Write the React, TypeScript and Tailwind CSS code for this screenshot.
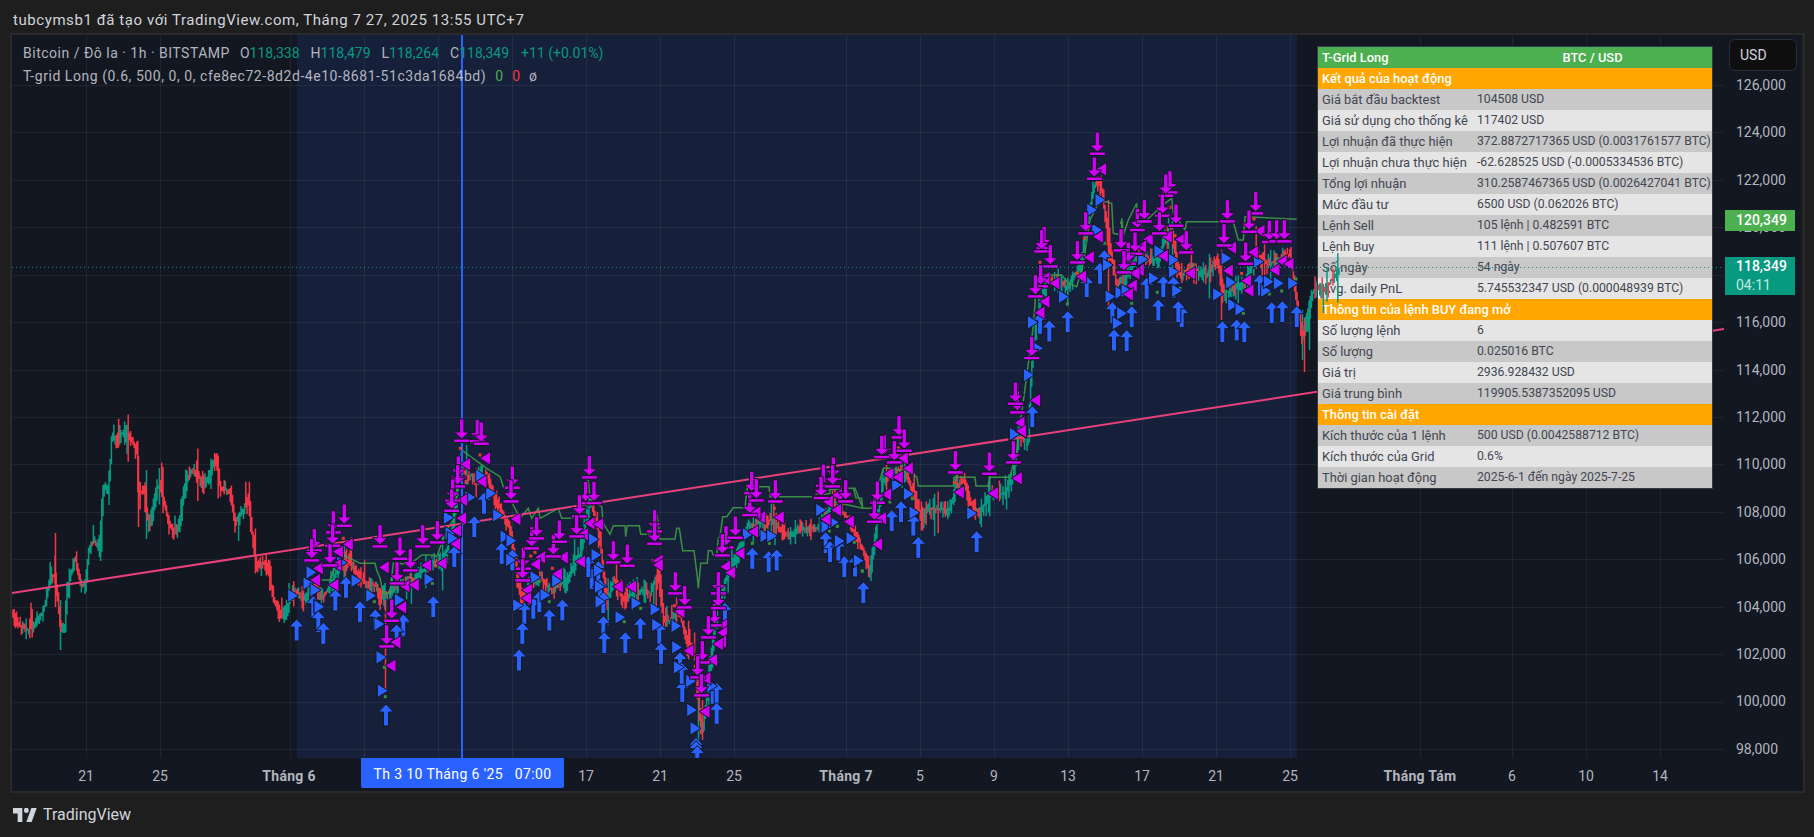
import React from "react";

type Pt = [number, number];

// toạ độ đọc từ ảnh phóng to 3x, đổi về toạ độ trang
const z = (ox: number, oy: number, pts: number[][]): Pt[] =>
  pts.map(([x, y]) => [ox + x / 3, oy + y / 3]);

const priceLabels = ["126,000", "124,000", "122,000", "120,000", "118,000", "116,000", "114,000", "112,000", "110,000", "108,000", "106,000", "104,000", "102,000", "100,000", "98,000"];
const gridY = priceLabels.map((_, i) => 85 + i * 47.43);
const gridX = [86, 160, 290, 364, 438, 512, 586, 660, 734, 846, 920, 994, 1068, 1142, 1216, 1290, 1420, 1512, 1586, 1660];

const ticks: { x: number; label: string; bold?: boolean }[] = [
  { x: 86, label: "21" },
  { x: 160, label: "25" },
  { x: 289, label: "Tháng 6", bold: true },
  { x: 586, label: "17" },
  { x: 660, label: "21" },
  { x: 734, label: "25" },
  { x: 846, label: "Tháng 7", bold: true },
  { x: 920, label: "5" },
  { x: 994, label: "9" },
  { x: 1068, label: "13" },
  { x: 1142, label: "17" },
  { x: 1216, label: "21" },
  { x: 1290, label: "25" },
  { x: 1420, label: "Tháng Tám", bold: true },
  { x: 1512, label: "6" },
  { x: 1586, label: "10" },
  { x: 1660, label: "14" },
];

const path: Pt[] = [
  ...z(0, 400, [[40, 650], [60, 680], [85, 690], [110, 670], [130, 630], [150, 540], [165, 520], [180, 680], [192, 700], [200, 580], [215, 510], [225, 470], [240, 550], [255, 560], [265, 450], [280, 420], [300, 450], [310, 250], [325, 280], [335, 100], [350, 130], [370, 90], [385, 100], [400, 130], [410, 150], [415, 290], [430, 260], [445, 370], [460, 320], [470, 260], [485, 270], [500, 350], [520, 400], [535, 390], [550, 280], [570, 210], [590, 220], [610, 250], [630, 225], [645, 170], [660, 260], [690, 280], [705, 370], [725, 340], [745, 290], [755, 400], [770, 500], [790, 490], [805, 510], [820, 600], [840, 650], [860, 630]]),
  ...z(280, 420, [[40, 510], [75, 540], [100, 490], [130, 530], [180, 440], [210, 420], [250, 490], [290, 500], [300, 540], [350, 490], [400, 480], [450, 430], [490, 420], [520, 310], [540, 130], [560, 170], [590, 160], [620, 170], [650, 250], [690, 330], [720, 530], [780, 470], [810, 510], [860, 480], [900, 400]]),
  ...z(570, 440, [[60, 180], [90, 300], [110, 500], [130, 410], [160, 480], [200, 450], [240, 460], [265, 400], [280, 540], [300, 540], [325, 510], [350, 600], [370, 620], [385, 780], [395, 880], [420, 690], [440, 500], [470, 410], [500, 350], [530, 260], [570, 250], [600, 240], [650, 290], [690, 265], [740, 265], [790, 190], [830, 230], [870, 310], [895, 380]]),
  ...z(790, 400, [[50, 380], [90, 320], [130, 300], [170, 350], [210, 430], [240, 520], [255, 400], [280, 240], [320, 210], [345, 220], [375, 290], [395, 360], [410, 325], [480, 330], [495, 260], [520, 240], [540, 310], [570, 340], [600, 280], [640, 280], [670, 230], [685, 100], [715, 120]]),
  ...z(1000, 230, [[85, 620], [90, 480], [100, 350], [115, 230]]),
  ...z(1000, 120, [[140, 480], [200, 500], [240, 440], [280, 200], [300, 180], [320, 330], [350, 500], [370, 480], [410, 410], [470, 420], [510, 330], [540, 470], [570, 440], [620, 465], [650, 420], [670, 520], [700, 510], [730, 490], [770, 400], [800, 430], [840, 420], [870, 400], [890, 540], [905, 650], [920, 620], [935, 520], [950, 495]]),
  [1325, 290], [1332, 278], [1340, 270],
];

const wicks: number[][] = [[55, 533, 607], [60, 600, 650], [138, 456, 527], [146, 470, 539], [385, 600, 690], [698, 680, 745], [702, 700, 740], [1302, 310, 360], [1304, 318, 372], [1309, 300, 350], [1108, 200, 310], [1172, 220, 290], [1221, 250, 320]];

const greenLine: Pt[] = [
  ...z(280, 420, [[125, 480], [150, 480], [165, 440], [190, 405], [240, 430], [285, 430], [290, 450], [300, 475], [310, 520], [330, 520], [340, 430], [390, 432], [425, 405], [460, 405], [470, 410], [500, 330], [520, 300], [545, 90], [620, 145], [660, 170], [670, 200], [690, 200], [700, 255], [720, 295], [745, 265], [755, 295], [775, 265], [780, 295], [835, 265], [845, 295], [890, 295], [900, 285]]),
  ...z(570, 440, [[30, 190], [55, 120], [60, 180], [95, 200], [100, 250], [120, 283], [130, 257], [165, 257], [167, 290], [172, 257], [208, 257], [212, 283], [240, 283], [262, 230], [270, 297], [315, 297], [320, 265], [328, 265], [338, 332], [372, 332], [382, 410], [385, 445], [392, 370], [412, 370], [415, 332], [425, 332], [430, 345], [440, 345], [445, 295], [450, 290], [458, 230], [470, 230], [490, 203], [525, 203], [532, 140], [597, 140], [600, 170], [730, 170], [760, 150], [845, 145], [855, 145], [878, 205]]),
  ...z(790, 400, [[70, 292], [120, 280], [120, 265], [190, 265], [198, 293], [215, 295], [218, 325], [245, 325], [280, 205], [300, 205], [350, 215], [380, 230], [385, 258], [490, 258], [492, 232], [555, 232], [558, 258], [595, 258], [598, 232], [660, 232], [680, 150]]),
  ...z(1000, 120, [[100, 620], [110, 480], [130, 465], [185, 465], [205, 490], [230, 500], [250, 430], [270, 300], [300, 240], [335, 250], [340, 340], [365, 345], [365, 295], [370, 345], [385, 300], [410, 250], [412, 300], [440, 300], [495, 250], [515, 235], [520, 280], [555, 330], [560, 305], [700, 305], [715, 360], [730, 360], [735, 290], [890, 298]]),
];

const sell: Pt[] = [
  ...z(280, 420, [[103, 392], [95, 422], [160, 338], [158, 378], [193, 318], [150, 437], [300, 380], [360, 417], [351, 491], [391, 452], [428, 380], [472, 368], [545, 63], [592, 65], [604, 72], [535, 174], [533, 200], [518, 243], [515, 273], [697, 204], [693, 245], [730, 447], [728, 482], [755, 386], [770, 356], [820, 410], [838, 366], [887, 350]]),
  ...z(280, 600, [[335, 63], [320, 140]]),
  ...z(570, 440, [[58, 113], [47, 190], [72, 190], [28, 230], [20, 290], [130, 368], [172, 378], [254, 275], [254, 312], [316, 461], [344, 503], [433, 557], [415, 593], [397, 668], [383, 713], [394, 767], [445, 461], [445, 505], [468, 323], [457, 347], [496, 294], [539, 226], [545, 160], [559, 182], [616, 185], [760, 137], [790, 117], [787, 140], [752, 172], [826, 184]]),
  ...z(790, 400, [[100, 258], [130, 237], [128, 260], [93, 295], [167, 305], [283, 170], [275, 172], [313, 188], [327, 113], [343, 153], [262, 309], [253, 366], [496, 218], [598, 222], [670, 188], [682, 38], [680, 12]]),
  ...z(1000, 120, [[292, 102], [283, 177], [132, 385], [125, 395], [151, 440], [232, 428], [257, 341], [122, 500], [106, 530], [95, 715], [412, 331], [433, 305], [405, 402], [385, 432], [363, 392], [372, 458], [510, 218], [497, 228], [487, 288], [478, 341], [528, 318], [559, 398], [682, 305], [672, 377], [767, 281], [747, 336], [737, 432], [808, 367], [830, 365], [853, 365]]),
  ...z(1000, 230, [[40, 698], [52, 548], [46, 522]]),
];

const sellTri: Pt[] = [
  ...z(280, 420, [[205, 373], [175, 395], [170, 435], [115, 445], [107, 480], [162, 495], [313, 442], [375, 498], [403, 495], [440, 436], [486, 430], [557, 133], [617, 115], [606, 185], [548, 240], [545, 295], [530, 332], [527, 372], [708, 297], [782, 412], [767, 433], [850, 412], [833, 462], [742, 510], [740, 535], [365, 562]]),
  ...z(280, 600, [[365, 22], [348, 127], [333, 197]]),
  ...z(570, 440, [[32, 365], [40, 283], [60, 250], [86, 253], [145, 440], [185, 440], [265, 362], [265, 375], [330, 515], [357, 632], [428, 660], [458, 556], [458, 578], [455, 605], [445, 612], [408, 715], [405, 815], [510, 340], [467, 380], [482, 398], [551, 275], [572, 232], [558, 218], [628, 232], [773, 184], [800, 210], [767, 238], [838, 243]]),
  ...z(790, 400, [[115, 305], [140, 330], [108, 358], [178, 365], [143, 285], [263, 433], [290, 283], [275, 355], [297, 222], [325, 232], [355, 205], [340, 175], [508, 277], [610, 280], [682, 235], [695, 95], [690, 68]]),
  ...z(1000, 120, [[305, 148], [295, 350], [268, 412], [245, 470], [135, 545], [165, 490], [135, 475], [120, 578], [445, 358], [425, 380], [418, 450], [405, 460], [397, 497], [385, 523], [490, 408], [502, 350], [542, 358], [572, 460], [695, 383], [685, 452], [740, 482], [747, 512], [760, 397], [780, 333], [825, 450], [847, 424], [867, 432]]),
  ...z(1000, 230, [[107, 511], [60, 578], [65, 603]]),
];

const buyTri: Pt[] = [
  ...z(280, 420, [[38, 527], [84, 490], [93, 457], [105, 510], [117, 558], [185, 428], [228, 482], [272, 527], [358, 540], [447, 478], [570, 232], [602, 168], [632, 220], [505, 293], [510, 340], [517, 355], [653, 286], [675, 350], [693, 362], [692, 420], [765, 472], [795, 525], [713, 556], [830, 482]]),
  ...z(280, 600, [[117, 20], [297, 72], [303, 172], [307, 272]]),
  ...z(570, 440, [[70, 298], [78, 345], [85, 392], [88, 440], [90, 485], [150, 532], [198, 490], [255, 508], [260, 555], [318, 558], [320, 622], [325, 682], [362, 723], [365, 810], [375, 865], [425, 738], [532, 283], [585, 288], [605, 288], [750, 210], [765, 260], [792, 247], [810, 303], [842, 295], [865, 362]]),
  ...z(790, 400, [[92, 330], [108, 380], [130, 367], [148, 423], [183, 415], [205, 482], [320, 255], [355, 282], [372, 338], [545, 340], [672, 103]]),
  ...z(1000, 120, [[97, 607], [190, 530], [275, 270], [300, 240], [290, 330], [322, 435], [330, 530], [360, 518], [378, 512], [365, 580], [352, 610], [428, 418], [477, 394], [460, 475], [520, 455], [520, 420], [530, 512], [653, 523], [678, 415], [692, 487], [698, 555], [720, 568], [775, 425], [797, 512], [805, 485], [835, 490], [878, 490]]),
  ...z(1000, 230, [[85, 435], [43, 612], [113, 355]]),
];

const buy: Pt[] = [
  ...z(280, 420, [[198, 472], [166, 510], [240, 545], [286, 570], [370, 590], [460, 530], [523, 380], [583, 290], [612, 220], [665, 370], [697, 390], [733, 550], [760, 535], [778, 515], [808, 570], [847, 540], [100, 530], [115, 575]]),
  ...z(280, 600, [[50, 60], [130, 70], [286, 30], [370, 45], [350, 75], [318, 315], [727, 70], [717, 150]]),
  ...z(570, 440, [[100, 530], [103, 578], [166, 578], [211, 535], [268, 550], [273, 610], [65, 385], [55, 350], [85, 365], [90, 420], [100, 458], [330, 638], [337, 725], [335, 670], [428, 730], [440, 730], [440, 790], [465, 490], [547, 325], [596, 335], [620, 330], [767, 275], [780, 305], [805, 295], [822, 350], [852, 348], [880, 426], [378, 895], [378, 905], [382, 920]]),
  ...z(790, 400, [[107, 398], [120, 425], [163, 470], [195, 468], [220, 548], [305, 332], [333, 305], [370, 345], [385, 412], [560, 395], [727, 22], [145, 420]]),
  ...z(1000, 120, [[148, 603], [203, 575], [260, 470], [313, 392], [300, 430], [337, 548], [395, 560], [342, 630], [380, 632], [440, 475], [490, 470], [520, 472], [475, 540], [545, 560], [535, 545], [667, 605], [710, 600], [733, 605], [780, 465], [815, 548], [847, 545], [890, 560], [120, 580]]),
  ...z(1000, 230, [[97, 530]]),
];

const greenDots: Pt[] = [
  ...z(280, 420, [[283, 545], [457, 490], [778, 485], [808, 545]]),
  ...z(280, 600, [[316, 290], [313, 202]]),
  ...z(1000, 120, [[202, 552], [472, 517], [808, 522], [845, 513], [730, 580], [395, 550], [365, 308], [540, 505], [313, 370], [888, 477]]),
  ...z(790, 400, [[118, 393], [142, 379], [217, 513], [300, 306], [367, 296], [193, 427]]),
  ...z(570, 440, [[163, 545], [212, 505], [547, 310], [598, 310], [802, 258], [877, 393], [262, 508]]),
];
const redDots: Pt[] = [
  ...z(280, 420, [[190, 355], [541, 85], [600, 105], [765, 397], [752, 408], [817, 445]]),
  ...z(1000, 120, [[120, 427], [253, 355], [232, 460], [525, 347], [510, 262], [725, 460], [828, 408], [762, 297]]),
  ...z(570, 440, [[313, 497], [613, 205], [823, 220], [250, 362]]),
  ...z(790, 400, [[325, 144], [494, 248]]),
];

const midAt = (x: number) => {
  for (let i = 1; i < path.length; i++) {
    if (x <= path[i][0]) {
      const [x0, y0] = path[i - 1];
      const [x1, y1] = path[i];
      return y0 + ((y1 - y0) * (x - x0)) / Math.max(x1 - x0, 0.01);
    }
  }
  return path[path.length - 1][1];
};

// nến giả lập bám theo đường giá, mỗi nến nối liền với điểm giữa của nến trước
const buildCandles = () => {
  let seed = 20250727;
  const rnd = () => {
    seed = (seed + 0x6d2b79f5) | 0;
    let t = Math.imul(seed ^ (seed >>> 15), 1 | seed);
    t = (t + Math.imul(t ^ (t >>> 7), 61 | t)) ^ t;
    return ((t ^ (t >>> 14)) >>> 0) / 4294967296;
  };
  const up: string[] = [];
  const down: string[] = [];
  const near: string[][] = [[], []];
  let prev = midAt(13);
  for (let x = 13; x <= 1340; x += 1.2) {
    const m = midAt(x);
    const slope = midAt(x + 4) - midAt(x - 4);
    const big = rnd() < 0.12;
    const amp = big ? 15 + rnd() * 16 : 4 + rnd() * 11;
    const a = (Math.min(m, prev) - amp * rnd()).toFixed(1);
    const b = (Math.max(m, prev) + amp * rnd()).toFixed(1);
    prev = m;
    const isUp = rnd() + slope * 0.03 < 0.5;
    const d = `M${x.toFixed(1)} ${a}V${b}`;
    if (x > 1318) near[isUp ? 0 : 1].push(d);
    else (isUp ? up : down).push(d);
  }
  wicks.forEach(([x, a, b], i) => (i % 2 ? up : down).push(`M${x + 0.5} ${a}V${b}`));
  return { up: up.join(""), down: down.join(""), nearUp: near[0].join(""), nearDown: near[1].join("") };
};

const candles = buildCandles();
const toLine = (pts: Pt[]) => pts.map(([x, y]) => `${x.toFixed(1)},${y.toFixed(1)}`).join(" ");

function ChartDrawing() {
  return (
    <svg className="absolute inset-0 block" width={1712} height={723} viewBox="12 35 1712 723">
      <rect x={297} y={35} width={1000} height={723} fill="#16203b" />
      {gridX.map((x) => (
        <line key={x} x1={x + 0.5} x2={x + 0.5} y1={35} y2={758} stroke="#ffffff" strokeOpacity={0.06} />
      ))}
      {gridY.map((y) => (
        <line key={y} x1={12} x2={1724} y1={Math.round(y) + 0.5} y2={Math.round(y) + 0.5} stroke="#ffffff" strokeOpacity={0.06} />
      ))}
      <path d={candles.up} stroke="#089981" strokeWidth={1.5} fill="none" />
      <path d={candles.down} stroke="#f23645" strokeWidth={1.5} fill="none" />
      <polyline points={toLine(greenLine)} fill="none" stroke="#43a047" strokeWidth={1.5} strokeOpacity={0.85} />
      <line x1={12} y1={593} x2={1724} y2={329} stroke="#e8407a" strokeWidth={2} />
      <line x1={462} x2={462} y1={35} y2={758} stroke="#2962ff" strokeWidth={2} />
      {greenDots.map(([x, y], i) => (
        <rect key={i} x={x - 1.5} y={y - 1.5} width={3} height={3} fill="#388e3c" />
      ))}
      {redDots.map(([x, y], i) => (
        <rect key={i} x={x - 1.5} y={y - 1.5} width={3} height={3} fill="#e53935" />
      ))}
      <g stroke="#131722" strokeWidth={1} fill="#2962ff">
        {buy.map(([x, y], i) => (
          <polygon key={i} points={`${x},${y - 1} ${x + 7.5},${y + 7} ${x + 2.5},${y + 7} ${x + 2.5},${y + 21} ${x - 2.5},${y + 21} ${x - 2.5},${y + 7} ${x - 7.5},${y + 7}`} />
        ))}
        {buyTri.map(([x, y], i) => (
          <polygon key={i} points={`${x - 5},${y - 7} ${x + 6},${y} ${x - 5},${y + 7}`} />
        ))}
      </g>
      <g stroke="#131722" strokeWidth={1} fill="#d000f5">
        {sellTri.map(([x, y], i) => (
          <polygon key={i} points={`${x + 5},${y - 7} ${x - 6},${y} ${x + 5},${y + 7}`} />
        ))}
        {sell.map(([x, y], i) => (
          <polygon key={i} points={`${x - 2.2},${y - 22} ${x + 2.2},${y - 22} ${x + 2.2},${y - 9} ${x + 7.5},${y - 9} ${x},${y - 2} ${x + 8},${y - 2} ${x + 8},${y + 1.5} ${x - 8},${y + 1.5} ${x - 8},${y - 2} ${x},${y - 2} ${x - 7.5},${y - 9} ${x - 2.2},${y - 9}`} />
        ))}
      </g>
    </svg>
  );
}

// phần nến và đường giá nằm đè lên bảng
function ChartOverlay() {
  return (
    <svg className="absolute inset-0 block pointer-events-none" width={1712} height={723} viewBox="12 35 1712 723">
      <path d={candles.nearUp} stroke="#089981" strokeWidth={1.5} fill="none" />
      <path d={candles.nearDown} stroke="#f23645" strokeWidth={1.5} fill="none" />
      <line x1={12} x2={1724} y1={267.5} y2={267.5} stroke="#089981" strokeDasharray="1 3" />
    </svg>
  );
}

const rows: { kind: "green" | "orange" | "dark" | "light"; a: string; b?: string }[] = [
  { kind: "green", a: "T-Grid Long", b: "BTC / USD" },
  { kind: "orange", a: "Kết quả của hoạt động" },
  { kind: "dark", a: "Giá bắt đầu backtest", b: "104508 USD" },
  { kind: "light", a: "Giá sử dụng cho thống kê", b: "117402 USD" },
  { kind: "dark", a: "Lợi nhuận đã thực hiện", b: "372.8872717365 USD (0.0031761577 BTC)" },
  { kind: "light", a: "Lợi nhuận chưa thực hiện", b: "-62.628525 USD (-0.0005334536 BTC)" },
  { kind: "dark", a: "Tổng lợi nhuận", b: "310.2587467365 USD (0.0026427041 BTC)" },
  { kind: "light", a: "Mức đầu tư", b: "6500 USD (0.062026 BTC)" },
  { kind: "dark", a: "Lệnh Sell", b: "105 lệnh | 0.482591 BTC" },
  { kind: "light", a: "Lệnh Buy", b: "111 lệnh | 0.507607 BTC" },
  { kind: "dark", a: "Số ngày", b: "54 ngày" },
  { kind: "light", a: "Avg. daily PnL", b: "5.745532347 USD (0.000048939 BTC)" },
  { kind: "orange", a: "Thông tin của lệnh BUY đang mở" },
  { kind: "light", a: "Số lượng lệnh", b: "6" },
  { kind: "dark", a: "Số lượng", b: "0.025016 BTC" },
  { kind: "light", a: "Giá trị", b: "2936.928432 USD" },
  { kind: "dark", a: "Giá trung bình", b: "119905.5387352095 USD" },
  { kind: "orange", a: "Thông tin cài đặt" },
  { kind: "dark", a: "Kích thước của 1 lệnh", b: "500 USD (0.0042588712 BTC)" },
  { kind: "light", a: "Kích thước của Grid", b: "0.6%" },
  { kind: "dark", a: "Thời gian hoạt động", b: "2025-6-1 đến ngày 2025-7-25" },
];

const rowClass = {
  green: "bg-[#4caf50] text-white font-medium",
  orange: "bg-[#ffa600] text-white font-medium",
  dark: "bg-[#c8c8c8] text-[#434651]",
  light: "bg-[#e5e5e5] text-[#434651]",
};

function StatsTable() {
  return (
    <div className="absolute left-[1306px] top-[12px] w-[394px] outline outline-1 outline-[#363a45] text-[12.9px] leading-[21px]">
      {rows.map((r) => (
        <div key={r.a} className={`flex h-[21px] whitespace-nowrap ${rowClass[r.kind]}`}>
          <div className="w-[155px] shrink-0 pl-[4px]">{r.a}</div>
          {r.kind === "green" ? (
            <div className="flex-1 text-center">{r.b}</div>
          ) : (
            <div className="flex-1 pl-[4px] text-[12.2px]">{r.b}</div>
          )}
        </div>
      ))}
    </div>
  );
}

function Legend() {
  return (
    <div className="absolute left-[11px] top-[7px] text-[14px] leading-[23px] text-[#b2b5be] whitespace-nowrap">
      <div className="flex">
        <span className="tracking-[0.5px]">Bitcoin / Đô la · 1h · BITSTAMP</span>
        <span className="ml-[10px]">O<span className="text-[#089981]">118,338</span></span>
        <span className="ml-[11px]">H<span className="text-[#089981]">118,479</span></span>
        <span className="ml-[11px]">L<span className="text-[#089981]">118,264</span></span>
        <span className="ml-[11px]">C<span className="text-[#089981]">118,349</span></span>
        <span className="ml-[12px] text-[#089981]">+11 (+0.01%)</span>
      </div>
      <div className="flex">
        <span className="tracking-[0.55px]">T-grid Long (0.6, 500, 0, 0, cfe8ec72-8d2d-4e10-8681-51c3da1684bd)</span>
        <span className="ml-[9px] text-[#4caf50]">0</span>
        <span className="ml-[9px] text-[#f23645]">0</span>
        <span className="ml-[9px]">ø</span>
      </div>
    </div>
  );
}

function PriceAxis() {
  return (
    <div className="relative w-[77px] bg-[#131722] text-[14px] text-[#b2b5be]">
      <div className="pt-[27px] flex flex-col">
        {priceLabels.map((p) => (
          <div key={p} className="h-[47.43px] leading-[47.43px] pl-[12px]">
            {p}
          </div>
        ))}
      </div>
      <div className="absolute left-[5px] top-[4px] w-[68px] h-[32px] rounded-[6px] border border-[#2a2e39] bg-[#0f0f0f] text-[#d1d4dc] leading-[30px] pl-[10px]">
        USD
      </div>
      <div className="absolute left-[1px] top-[175px] w-[70px] h-[21px] bg-[#4caf50] text-white leading-[21px] pl-[11px] font-medium">
        120,349
      </div>
      <div className="absolute left-[1px] top-[222px] w-[70px] h-[38px] bg-[#089981] text-white leading-[19px] pl-[11px] font-medium">
        <div>118,349</div>
        <div className="text-[#c4e8e0] font-normal">04:11</div>
      </div>
    </div>
  );
}

function TimeAxis() {
  return (
    <div className="relative h-[33px] bg-[#131722] text-[14px] text-[#b2b5be] flex">
      {ticks.map((t, i) => (
        <div
          key={t.label + t.x}
          className={`w-0 flex justify-center leading-[36px] whitespace-nowrap ${t.bold ? "font-bold tracking-[0.3px]" : ""}`}
          style={{ marginLeft: t.x - (i ? ticks[i - 1].x : 12) }}
        >
          {t.label}
        </div>
      ))}
      <div className="absolute left-[349px] top-0 w-[203px] h-[30px] bg-[#2962ff] rounded-b-[2px] text-white text-center leading-[32px] whitespace-pre tracking-[0.4px]">
        Th 3 10 Tháng 6 '25   07:00
      </div>
    </div>
  );
}

export default function App() {
  return (
    <div className="w-full h-screen overflow-hidden flex flex-col bg-[#1e1e1e] font-[Roboto,sans-serif]">
      <div className="h-[33px] shrink-0 pl-[13px] pt-[10px] text-[15px] leading-[20px] tracking-[0.57px] text-[#d1d4dc] whitespace-nowrap">
        tubcymsb1 đã tạo với TradingView.com, Tháng 7 27, 2025 13:55 UTC+7
      </div>
      <div className="ml-[10px] mr-[9px] h-[760px] shrink-0 border-2 border-[#2a2a2a] flex flex-col">
        <div className="flex h-[723px]">
          <div className="relative w-[1712px] bg-[#131722] overflow-hidden">
            <ChartDrawing />
            <Legend />
            <StatsTable />
            <ChartOverlay />
          </div>
          <PriceAxis />
        </div>
        <TimeAxis />
      </div>
      <div className="flex items-center gap-[6px] pl-[13px] h-[44px] text-[16px] text-[#d1d4dc]">
        <svg width={24} height={14} viewBox="0 4 36 18" fill="#d1d4dc" preserveAspectRatio="none">
          <path d="M14 22H7V11H0V4h14v18zM28 22h-8l7.5-18h8L28 22z" />
          <circle cx={20} cy={7} r={3.5} />
        </svg>
        <span>TradingView</span>
      </div>
    </div>
  );
}
